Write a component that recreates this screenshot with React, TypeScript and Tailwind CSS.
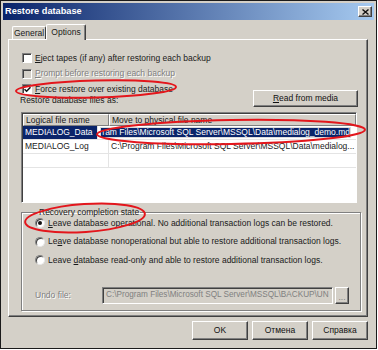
import React from 'react';

const raised =
  'bg-[#d4d0c8] border border-t-white border-l-white border-r-[#404040] border-b-[#404040] shadow-[inset_-1px_-1px_0_#808080]';

function CheckBox({ checked, disabled }: { checked?: boolean; disabled?: boolean }) {
  return (
    <span
      className={`w-[10px] h-[10px] shrink-0 border border-t-[#808080] border-l-[#808080] border-r-white border-b-white shadow-[inset_1px_1px_0_#404040] flex items-center justify-center ${
        disabled ? 'bg-[#d4d0c8]' : 'bg-white'
      }`}
    >
      {checked && (
        <svg width="7" height="7" viewBox="0 0 7 7">
          <path d="M0.5 3.2 L2.6 5.3 L6.5 1.2" fill="none" stroke="#111" strokeWidth="1.5" />
        </svg>
      )}
    </span>
  );
}

function Radio({ checked }: { checked?: boolean }) {
  return (
    <span className="w-[10px] h-[10px] shrink-0 rounded-full bg-white border border-t-[#808080] border-l-[#808080] border-r-[#e8e8e8] border-b-[#e8e8e8] shadow-[inset_1px_1px_0_#404040] flex items-center justify-center">
      {checked && <span className="w-[4px] h-[4px] rounded-full bg-[#111]" />}
    </span>
  );
}

function Btn({ children, className = '' }: { children: React.ReactNode; className?: string }) {
  return (
    <div className={`${raised} flex items-center justify-center text-[#111] ${className}`}>{children}</div>
  );
}

export default function App() {
  return (
    <div className="relative w-[378px] h-[350px] bg-white font-['Liberation_Sans',Arial,sans-serif] text-[8.5px] leading-none text-[#1a1a1a]">
      <div className="w-[377px] h-[349px] bg-[#d4d0c8] border border-[#1a1a1a] p-[2px] flex flex-col">
        {/* title bar */}
        <div className="h-[17px] bg-[linear-gradient(to_right,#0a246a,#a6caf0)] flex items-center justify-between pl-[2px] pr-[2px]">
          <span className="text-white font-bold text-[9.2px]">Restore database</span>
          <div className={`${raised} w-[14px] h-[11px] flex items-center justify-center`}>
            <svg width="7" height="6" viewBox="0 0 7 6">
              <path d="M0.5 0.5 L6.5 5.5 M6.5 0.5 L0.5 5.5" stroke="#111" strokeWidth="1.4" />
            </svg>
          </div>
        </div>

        <div className="px-[5px] pr-[6px] flex flex-col">
          {/* tabs */}
          <div className="mt-[4px] h-[15px] flex items-end pl-[4px]">
            <div className="h-[13px] w-[34px] border border-b-0 border-t-white border-l-white border-r-[#404040] rounded-t-[2px] flex items-center justify-center">
              General
            </div>
            <div className="relative z-10 mb-[-1px] h-[16px] w-[40px] bg-[#d4d0c8] border border-b-0 border-t-white border-l-white border-r-[#404040] shadow-[inset_-1px_0_0_#808080] rounded-t-[2px] flex items-center justify-center">
              Options
            </div>
          </div>

          {/* panel */}
          <div className="h-[278px] border border-t-white border-l-white border-r-[#404040] border-b-[#404040] shadow-[inset_-1px_-1px_0_#808080] pt-[12px] pl-[12px] flex flex-col">
            <div className="flex flex-col gap-[3.5px] pl-[1px]">
              <div className="h-[12px] flex items-center gap-[3px]">
                <CheckBox />
                <span>
                  <u>E</u>ject tapes (if any) after restoring each backup
                </span>
              </div>
              <div className="h-[12px] flex items-center gap-[3px]">
                <CheckBox disabled />
                <span className="text-[#808080] [text-shadow:1px_1px_0_#fff]">
                  <u>P</u>rompt before restoring each backup
                </span>
              </div>
              <div className="h-[12px] flex items-center gap-[3px]">
                <CheckBox checked />
                <span>
                  <u>F</u>orce restore over existing database
                </span>
              </div>
            </div>

            <div className="mt-[-5px] h-[17px] flex items-center justify-between pr-[9px]">
              <span className="-ml-[1px] mt-[4px]">Restore database files as:</span>
              <Btn className="w-[105px] h-[17px]">
                <span>
                  <u>R</u>ead from media
                </span>
              </Btn>
            </div>

            {/* file grid */}
            <div className="mt-[5px] mr-[10px] h-[91px] bg-white border border-t-[#808080] border-l-[#808080] border-r-white border-b-white shadow-[inset_1px_1px_0_#404040] pl-[1px] pt-[1px] overflow-hidden">
              <div className="flex h-[12px]">
                <div className="w-[86px] border border-t-white border-l-white border-r-[#808080] border-b-[#808080] bg-[#d4d0c8] flex items-center pl-[2px]">
                  Logical file name
                </div>
                <div className="flex-1 border border-t-white border-l-white border-r-[#808080] border-b-[#808080] bg-[#d4d0c8] flex items-center pl-[2px]">
                  Move to physical file name
                </div>
              </div>
              <div className="flex h-[14px] border-b border-[#e4e4e4]">
                <div className="w-[86px] bg-[#0a246a] text-white flex items-center pl-[2px] border-r border-[#e4e4e4]">
                  MEDIALOG_Data
                </div>
                <div className="flex-1 flex items-center pl-[2px] pr-[5px] py-[1px]">
                  <div className="h-full w-full bg-[#0a246a] border border-[#dcdcdc] text-white flex items-center pl-[1px] overflow-hidden whitespace-nowrap">
                    ram Files\Microsoft SQL Server\MSSQL\Data\medialog_demo.md
                  </div>
                </div>
              </div>
              <div className="flex h-[14px] border-b border-[#e4e4e4]">
                <div className="w-[86px] flex items-center pl-[2px] border-r border-[#e4e4e4]">MEDIALOG_Log</div>
                <div className="flex-1 flex items-center pl-[2px] pr-[6px] overflow-hidden whitespace-nowrap">
                  C:\Program Files\Microsoft SQL Server\MSSQL\Data\medialog...
                </div>
              </div>
              <div className="flex h-[14px] border-b border-[#e4e4e4]">
                <div className="w-[86px] border-r border-[#e4e4e4]" />
                <div className="flex-1" />
              </div>
            </div>

            {/* recovery group */}
            <fieldset className="mt-[4px] mr-[6px] h-[104px] border border-[#808080] shadow-[inset_1px_1px_0_#fff,1px_1px_0_#fff] pl-[13px] pr-[6px] flex flex-col">
              <legend className="ml-[3px] px-[1px] leading-[10px]">Recovery completion state</legend>
              <div className="flex flex-col gap-[6.5px]">
                <div className="h-[12px] flex items-center gap-[3px]">
                  <Radio checked />
                  <span>
                    <u>L</u>eave database operational. No additional transaction logs can be restored.
                  </span>
                </div>
                <div className="h-[12px] flex items-center gap-[3px]">
                  <Radio />
                  <span>
                    Le<u>a</u>ve database nonoperational but able to restore additional transaction logs.
                  </span>
                </div>
                <div className="h-[12px] flex items-center gap-[3px]">
                  <Radio />
                  <span>
                    Leave <u>d</u>atabase read-only and able to restore additional transaction logs.
                  </span>
                </div>
              </div>
              <div className="mt-[21px] h-[17px] flex items-center">
                <span className="w-[67px] text-[#808080] [text-shadow:1px_1px_0_#fff]">Undo file:</span>
                <div className="w-[231px] h-[17px] bg-[#d4d0c8] border border-t-[#808080] border-l-[#808080] border-r-white border-b-white shadow-[inset_1px_1px_0_#404040] flex items-center pl-[3px] overflow-hidden whitespace-nowrap text-[#808080] text-[8.2px]">
                  C:\Program Files\Microsoft SQL Server\MSSQL\BACKUP\UN
                </div>
                <Btn className="ml-[2px] w-[14px] h-[17px] text-[#808080]">
                  <span className="mt-[3px]">...</span>
                </Btn>
              </div>
            </fieldset>
          </div>

          {/* dialog buttons */}
          <div className="mt-[4px] flex justify-end gap-[4px]">
            <Btn className="w-[56px] h-[19px]">OK</Btn>
            <Btn className="w-[56px] h-[19px]">Отмена</Btn>
            <Btn className="w-[56px] h-[19px]">Справка</Btn>
          </div>
        </div>
      </div>

      {/* red annotation marks */}
      <svg className="absolute inset-0 pointer-events-none" width="378" height="350" viewBox="0 0 378 350">
        <ellipse cx="96" cy="89" rx="80" ry="8.5" transform="rotate(-1.5 96 89)" fill="none" stroke="#e3161c" strokeWidth="2" />
        <ellipse cx="231" cy="132" rx="134" ry="12" transform="rotate(-1 231 132)" fill="none" stroke="#e3161c" strokeWidth="2" />
        <ellipse cx="85" cy="218" rx="60" ry="14" transform="rotate(-4 85 218)" fill="none" stroke="#e3161c" strokeWidth="2" />
      </svg>
    </div>
  );
}
